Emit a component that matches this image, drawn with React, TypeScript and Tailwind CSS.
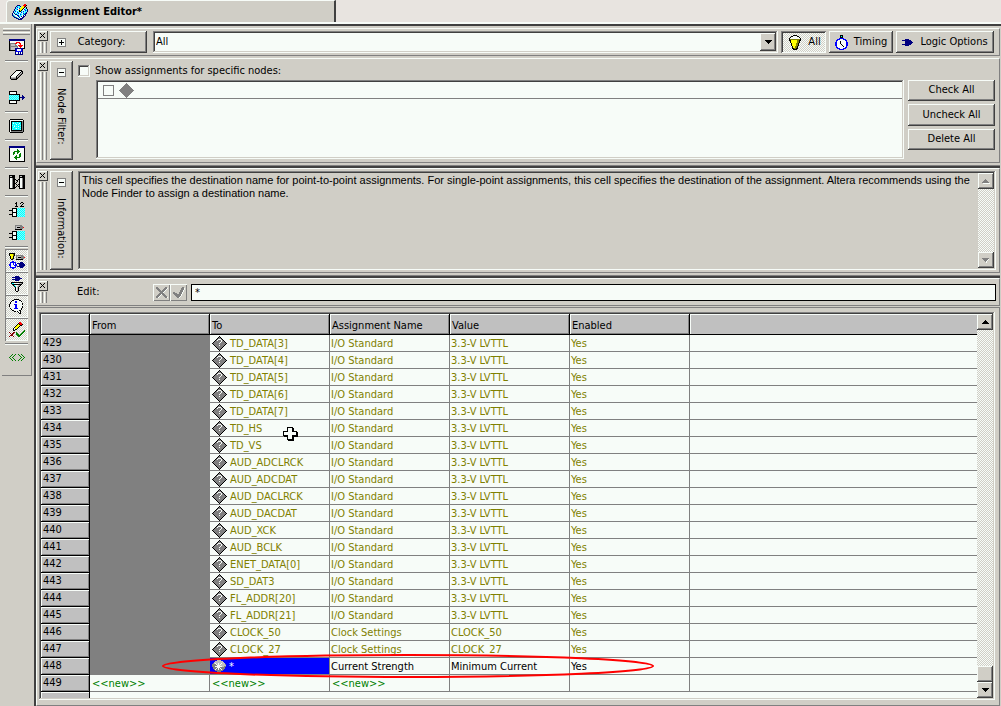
import React from "react";

const raised =
  "shadow-[inset_-1px_-1px_#404040,inset_1px_1px_#f7fcf8,inset_-2px_-2px_#808080]";
const sunken =
  "shadow-[inset_-1px_-1px_#f7fcf8,inset_1px_1px_#808080,inset_-2px_-2px_#d0cec6,inset_2px_2px_#404040]";
const dither =
  "bg-[repeating-conic-gradient(#f7fcf8_0_25%,#d0cec6_0_50%)] [background-size:2px_2px]";

const palette: Record<string, string> = {
  K: "#000000",
  B: "#000080",
  U: "#0000ff",
  A: "#0080c0",
  W: "#f7fcf8",
  G: "#808080",
  L: "#c0c0c0",
  C: "#00ffff",
  T: "#80ffff",
  R: "#ff0000",
  M: "#800000",
  Y: "#ffff00",
  O: "#808000",
  N: "#008000",
};

function Pixels({ rows, className }: { rows: string[]; className?: string }) {
  const w = Math.max(...rows.map((r) => r.length));
  return (
    <svg
      width={w}
      height={rows.length}
      viewBox={`0 0 ${w} ${rows.length}`}
      shapeRendering="crispEdges"
      className={`shrink-0 ${className ?? ""}`}
      aria-hidden="true"
    >
      {rows.flatMap((row, y) =>
        [...row].map((c, x) =>
          palette[c] ? (
            <rect key={`${x}-${y}`} x={x} y={y} width={1} height={1} fill={palette[c]} />
          ) : null,
        ),
      )}
    </svg>
  );
}

const editorArt = [
  "............RR..",
  ".....BBB...RRRK.",
  "....BCTCB.YYRK..",
  "...BTUTCTYYYK.K.",
  "...BCTWUYYYKWCK.",
  "..BTCUWYYYKWUCTB",
  "..BCTWTKYKTWTUCB",
  ".BTUTCTKKCTUTCTB",
  ".BCTWUCTWUTCTCB.",
  "BWBTCTUTCTWUCBB.",
  "BTWBBCTWUCTCBB..",
  "BATWWBUTCTWBWB..",
  ".BATWWBCTBWBB...",
  "..BBATWBWWBB....",
  "....BBAWBBB.....",
  "......BBBB......",
];
const exportArt = [
  "BBBBBBBBBBBBBBBB",
  "BBBBBBBBBBBBBBBB",
  "KWWWWWWWWWWWWWWK",
  "KWWWWWWRRRRWWWWK",
  "KGGGGGRRWWRRWWWK",
  "KGLLLLGWWWWRWWWK",
  "KGLLLLGGWRRRRRWK",
  "KGGGGGGGGWRRRWWK",
  "KGLLLLLLGWWRWWWK",
  "KGLLLLBBBBBBBBKK",
  "KGLLLLBUWWWWUB..",
  "KKKKKKBUWWWWUB..",
  "......BUUUUUUB..",
  "......BWWBWBWB..",
  "......BWWBWBWB..",
  "......BBBBBBBB..",
];
const eraserArt = [
  "......KKKKKK..",
  ".....KWWWWWKK.",
  "....KWWWWWKLK.",
  "...KWWWWWKLGK.",
  "..KWWWWWKLGK..",
  ".KWWWWWKLGK...",
  "KWWWWWKLGK....",
  "KLLLLLKGK.....",
  "KGGGGGKK......",
  ".KKKKKK.......",
];
const insertArt = [
  "KKKKKKKK........",
  "KWWWWWWK........",
  "KWWWWWWK........",
  "KKKKKKKKKKK.....",
  "CTCTCTCTCTK..B..",
  "TCTCTCTCTCK..BB.",
  "CTCTCTCTCTKBBBBB",
  "TCTCTCTCTCK..BB.",
  "CTCTCTCTCTK..B..",
  "KKKKKKKKKKK.....",
  "KWWWWWWK........",
  "KWWWWWWK........",
  "KKKKKKKK........",
];
const chipArt = [
  ".KKKKKKKKKKKKK.",
  "KWWWWWWWWWWWWWK",
  "KWKKKKKKKKKKKGK",
  "KWKCTCCCTCCCKGK",
  "KWKCWCTCCCWCKGK",
  "KWKCCCCWCTCCKGK",
  "KWKTCTCCCCCTKGK",
  "KWKCCWCTCWCCKGK",
  "KWKCTCCCCCCTKGK",
  "KWKCCCTWCTCCKGK",
  "KWKTCCCCCCCTKGK",
  "KWKKKKKKKKKKKGK",
  "KWGGGGGGGGGGGGK",
  ".KKKKKKKKKKKKK.",
];
const refreshArt = [
  "BBBBBBBBBBBBBBBB",
  "BBBBBBBBBBBBBBBB",
  "KWWWWWWWWWWWWWWK",
  "KWWWWWWWNWWWWWWK",
  "KWWWWWWWNNWWWWWK",
  "KWWWWNNNNNNWWWWK",
  "KWWWNNWWNNWWWWWK",
  "KWWWNNWWNWWNWWWK",
  "KWWWNWWWWWNNWWWK",
  "KWWWWWWNWWNNWWWK",
  "KWWWWWNNWWNNWWWK",
  "KWWWWNNNNNNWWWWK",
  "KWWWWWNNWWWWWWWK",
  "KWWWWWWNWWWWWWWK",
  "KWWWWWWWWWWWWWWK",
  "KKKKKKKKKKKKKKKK",
];
const findArt = [
  "KKKKKK....KKKKKK",
  "KLLKKK....KLLKKK",
  "KKKKKK....KKKKKK",
  "KWWGKK....KWWGKK",
  "KWWGKKK..KKWWGKK",
  "KWWGKK.KK.KWWGKK",
  "KWWGKK..K.KWWGKK",
  "KWWGKK.K..KWWGKK",
  "KWWGKKK...KWWGKK",
  "KWWGKK.K.KKWWGKK",
  "KWWGKK..K.KWWGKK",
  "KWWGKK.K.KKWWGKK",
  "KWWGKKK...KWWGKK",
  "KKKKKK....KKKKKK",
];
const numberArt = [
  ".......K....KK..",
  "......KK...K..K.",
  ".......K.....K..",
  ".......K....K...",
  "......KKK..KKKK.",
  "................",
  "...KKKKKTCTCTCTC",
  "...KWWWKCTCTCTCT",
  "KKKKWWWKTCTCTCTC",
  "...KWWWKCTCTCTCT",
  "...KKKKKTCTCTCTC",
  "...KWWWKCTCTCTCT",
  "KKKKWWWKTCTCTCTC",
  "...KWWWKCTCTCTCT",
  "...KKKKKTCTCTCTC",
];
const tagArt = [
  "......GGGGGGG...",
  "......GLLLLGGG..",
  "......GLKKKGGGR.",
  "......GLLLLGGG..",
  "......KKKKKKK...",
  "................",
  "...KKKKKTCTCTCTC",
  "...KWWWKCTCTCTCT",
  "KKKKWWWKTCTCTCTC",
  "...KWWWKCTCTCTCT",
  "...KKKKKTCTCTCTC",
  "...KWWWKCTCTCTCT",
  "KKKKWWWKTCTCTCTC",
  "...KWWWKCTCTCTCT",
  "...KKKKKTCTCTCTC",
];
const categoriesArt = [
  "KKKKKK..........",
  "KYYYOK..........",
  "KYYYOK.GGGGGGG..",
  ".KYYK..GLLLLGGG.",
  ".KYYK..GLKKKGGGR",
  ".KYOK..GLLLLGGG.",
  "..KK...KKKKKKK..",
  "................",
  "...UU...........",
  ".UUUUUU....BBB..",
  ".UWWUWU.BBBBBBB.",
  "UUWWUWUU..BBBBBB",
  "UUWWWUUU..BBBBBB",
  ".UWWWWU.BBBBBBB.",
  ".UUUUUU....BBB..",
  "...UU...........",
];
const filterArt = [
  "......BBBB......",
  "...BBBBBBBB.....",
  "......BBBBBBB...",
  "...BBBBBBBB.....",
  "......BBBB......",
  "................",
  "..KKKKKKKKKKKK..",
  "..KCCWWWWWLLGK..",
  "...KKKKKKKKKK...",
  "....KCWWWLGK....",
  ".....KCWLGK.....",
  "......KWLK......",
  "......KWLK......",
  "......KWLK......",
  "......KWLK......",
  ".......KK.......",
];
const infoArt = [
  ".....KKKKK......",
  "...KKWWWWWKK....",
  "..KWWWUUWWWWK...",
  ".KWWWWUUWWWWW...",
  ".KWWWWWWWWWWWK..",
  "KWWWWUUUWWWWWK..",
  "KWWWWWUUWWWWW...",
  "KWWWWWUUWWWWWK..",
  ".WWWWWUUWWWWWK..",
  ".KWWWUUUUWWWK...",
  "..KWWWWWWWWWK...",
  "...KKWWWWWKK....",
  ".....KK.KWWK....",
  ".........KWK....",
  "..........KK....",
];
const pencilArt = [
  "..........RR....",
  ".........KRRR...",
  "........KYKRRK..",
  ".......KYYYKK...",
  "......KYYYK.....",
  ".....KYYYK......",
  "....KWYYK.......",
  "....KWKK........",
  "....KK.........N",
  "..............NN",
  "M...MM.N.....NN.",
  ".M.MM..NN...NN..",
  "..MM...NNN.NN...",
  ".MMM....NNNN....",
  "M...M....NN.....",
];
const codeArt = [
  "...N..N..N..N...",
  "..N..N....N..N..",
  ".N..N......N..N.",
  "N..N........N..N",
  ".N..N......N..N.",
  "..N..N....N..N..",
  "...N..N..N..N...",
];
const bucketArt = [
  "....KKKK....",
  "..KKWWWWKK..",
  ".KWWWWWWWWK.",
  "KWWWWWWWWWWK",
  "KOOOOOOOOOOK",
  "KKYYYYYYOOKK",
  ".KYYYYYYOOK.",
  ".KYYYYYYOOK.",
  "..KYYYYOOK..",
  "..KYYYYOOK..",
  "..KYYYYOOK..",
  "...KYYOOK...",
  "...KYYOOK...",
  "...KKOOKK...",
  "....KKKK....",
];
const clockArt = [
  ".....KKK.....",
  ".....KCK.....",
  ".....KKK.....",
  "....UUUUU....",
  "..UUUWWWUUU..",
  ".UUWWWWWWWUU.",
  ".UWWWKWWWWWU.",
  "UUWWWKWWWWWUU",
  "UUWWWKWWWWWUU",
  "UUWWWWKWWWWUU",
  "UUWWWWWKWWWUU",
  ".UWWWWWWKWWU.",
  ".UUWWWWWWWUU.",
  "..UUUWWWUUU..",
  "....UUUUU....",
];
const plugArt = [
  "...BBBB....",
  "BBBBBBBBB..",
  "...BBBBBBB.",
  "...BBBBBBBB",
  "...BBBBBBB.",
  "BBBBBBBBB..",
  "...BBBB....",
];
const closeArt = ["K...K", ".K.K.", "..K..", ".K.K.", "K...K"];
const minusArt = [
  "GGGGGGGGG",
  "GWWWWWWWG",
  "GWWWWWWWG",
  "GWWWWWWWG",
  "GWKKKKKWG",
  "GWWWWWWWG",
  "GWWWWWWWG",
  "GWWWWWWWG",
  "GGGGGGGGG",
];
const plusArt = [
  "GGGGGGGGG",
  "GWWWWWWWG",
  "GWWWKWWWG",
  "GWWWKWWWG",
  "GWKKKKKWG",
  "GWWWKWWWG",
  "GWWWKWWWG",
  "GWWWWWWWG",
  "GGGGGGGGG",
];
const downArt = ["KKKKKKK", ".KKKKK.", "..KKK..", "...K..."];
const upArt = ["...K...", "..KKK..", ".KKKKK.", "KKKKKKK"];
const upGreyArt = ["...G....", "..GGG...", ".GGGGG..", "GGGGGGG.", ".WWWWWWW"];
const downGreyArt = ["GGGGGGG.", ".GGGGGW.", "..GGGW..", "...GW...", "....W..."];
const crossArt = [
  "GG.......GG.",
  "GGG.....GGGW",
  ".GGG...GGGW.",
  "..GGG.GGGW..",
  "...GGGGGW...",
  "....GGGW....",
  "...GGGGG....",
  "..GGGWGGG...",
  ".GGGW..GGG..",
  "GGGW....GGG.",
  "GGW......GGW",
];
const tickArt = [
  ".........GG.",
  "........GGGW",
  "........GGGW",
  ".......GGGW.",
  ".......GGGW.",
  "GG....GGGW..",
  "GGGG..GGGW..",
  ".GGGGGGGW...",
  "..GGGGGGW...",
  "...GGGGW....",
  "....GGW.....",
];
const nodeArt = [
  ".......K.......",
  "......KGK......",
  ".....KGGGK.....",
  "....KGWWWGK....",
  "...KGWGGGWGK...",
  "..KGGGGGGWGGK..",
  ".KGGGGGGWGGGGK.",
  "KGGGGGGWGGGGGGK",
  ".KGGGGGGGGGGGK.",
  "..KGGGGWGGGGK..",
  "...KGGGGGGGK...",
  "....KGGGGGK....",
  ".....KGGGK.....",
  "......KGK......",
  ".......K.......",
];
const wildcardArt = [
  ".....LLLL.....",
  "...LLLLLLLL...",
  "..LLLLLLLLLL..",
  ".GLWLLWLLWLLL.",
  "GGGGWLWLWLLLLG",
  "GGGGGWWWLLLLLL",
  "GGGWWWWWWWLLGG",
  ".GGGGWWWGGGGG.",
  ".GGGWGWGWGGGG.",
  "..GWGGWGGWGG..",
  "...GGGGGGGG...",
  ".....GGGG.....",
];
const diamondArt = [
  ".......G.......",
  "......GGG......",
  ".....GGGGG.....",
  "....GGGGGGG....",
  "...GGGGGGGGG...",
  "..GGGGGGGGGGG..",
  ".GGGGGGGGGGGGG.",
  "GGGGGGGGGGGGGGG",
  ".GGGGGGGGGGGGG.",
  "..GGGGGGGGGGG..",
  "...GGGGGGGGG...",
  "....GGGGGGG....",
  ".....GGGGG.....",
  "......GGG......",
  ".......G.......",
];
const pointerArt = [
  "....KKKKKK.....",
  "....KWWWWKK....",
  "....KWWWWKK....",
  "....KWWWWKK....",
  "KKKKKWWWWKKKKK.",
  "KWWWWWWWWWWWWKK",
  "KWWWWWWWWWWWWKK",
  "KWWWWWWWWWWWWKK",
  "KKKKKWWWWKKKKKK",
  ".KKKKWWWWKKKKKK",
  "....KWWWWKK....",
  "....KWWWWKK....",
  "....KKKKKKK....",
  ".....KKKKKK....",
];

function ToolButton({ art, label, pressed }: { art: string[]; label: string; pressed?: boolean }) {
  return (
    <button
      type="button"
      aria-label={label}
      aria-pressed={pressed}
      className={`flex h-[23px] w-[23px] items-center justify-center ${
        pressed ? `${dither} shadow-[inset_1px_1px_#808080,inset_-1px_-1px_#f7fcf8]` : ""
      }`}
    >
      <Pixels rows={art} />
    </button>
  );
}

function Separator() {
  return (
    <div className="flex h-[5px] w-[23px] items-center">
      <div className="h-[2px] w-full border-t border-[#808080] bg-[#f7fcf8]" />
    </div>
  );
}

function Grip({ label }: { label: string }) {
  return (
    <div className="flex w-[10px] shrink-0 flex-col items-center gap-px">
      <button
        type="button"
        aria-label={`Close ${label}`}
        className="flex h-[10px] w-[10px] items-center justify-center pr-px pb-px shadow-[inset_-1px_-1px_#404040,inset_1px_1px_#f7fcf8]"
      >
        <Pixels rows={closeArt} />
      </button>
      <div className="flex flex-1 gap-px">
        <div className="w-[3px] border-r border-l border-l-[#f7fcf8] border-r-[#808080]" />
        <div className="w-[3px] border-r border-l border-l-[#f7fcf8] border-r-[#808080]" />
      </div>
    </div>
  );
}

function Panel({ label, children, className }: { label: string; children: React.ReactNode; className?: string }) {
  return (
    <section
      aria-label={label}
      className={`flex gap-[2px] border-t border-r border-b border-l border-t-[#f7fcf8] border-r-[#808080] border-b-[#808080] border-l-[#f7fcf8] py-[2px] pr-[3px] pl-px ${className ?? ""}`}
    >
      <Grip label={label} />
      {children}
    </section>
  );
}

function SideTab({ text }: { text: string }) {
  return (
    <button
      type="button"
      aria-expanded="true"
      className={`flex w-[23px] shrink-0 flex-col items-center gap-[11px] pt-[7px] ${raised}`}
    >
      <Pixels rows={minusArt} />
      <span className="pr-px leading-[14px] [writing-mode:vertical-rl]">{text}</span>
    </button>
  );
}

function PushButton({ children, className }: { children: React.ReactNode; className?: string }) {
  return (
    <button type="button" className={`flex items-center justify-center ${raised} ${className ?? ""}`}>
      {children}
    </button>
  );
}

const assignments: [number, string, string, string][] = [
  [429, "TD_DATA[3]", "I/O Standard", "3.3-V LVTTL"],
  [430, "TD_DATA[4]", "I/O Standard", "3.3-V LVTTL"],
  [431, "TD_DATA[5]", "I/O Standard", "3.3-V LVTTL"],
  [432, "TD_DATA[6]", "I/O Standard", "3.3-V LVTTL"],
  [433, "TD_DATA[7]", "I/O Standard", "3.3-V LVTTL"],
  [434, "TD_HS", "I/O Standard", "3.3-V LVTTL"],
  [435, "TD_VS", "I/O Standard", "3.3-V LVTTL"],
  [436, "AUD_ADCLRCK", "I/O Standard", "3.3-V LVTTL"],
  [437, "AUD_ADCDAT", "I/O Standard", "3.3-V LVTTL"],
  [438, "AUD_DACLRCK", "I/O Standard", "3.3-V LVTTL"],
  [439, "AUD_DACDAT", "I/O Standard", "3.3-V LVTTL"],
  [440, "AUD_XCK", "I/O Standard", "3.3-V LVTTL"],
  [441, "AUD_BCLK", "I/O Standard", "3.3-V LVTTL"],
  [442, "ENET_DATA[0]", "I/O Standard", "3.3-V LVTTL"],
  [443, "SD_DAT3", "I/O Standard", "3.3-V LVTTL"],
  [444, "FL_ADDR[20]", "I/O Standard", "3.3-V LVTTL"],
  [445, "FL_ADDR[21]", "I/O Standard", "3.3-V LVTTL"],
  [446, "CLOCK_50", "Clock Settings", "CLOCK_50"],
  [447, "CLOCK_27", "Clock Settings", "CLOCK_27"],
];

const cellBase =
  "h-[17px] overflow-hidden border-r border-b border-[#808080] p-0 whitespace-nowrap";
const cell = `${cellBase} pl-[2px] leading-4`;
const textCell = `${cellBase} pt-[2px] pl-px leading-[14px]`;
const newCell = `${cellBase} pt-[2px] pl-[2px] leading-[14px]`;
const rowHead =
  "h-[17px] border-r border-b border-black bg-[#c0c0c0] p-0 pl-[2px] text-left leading-4 font-normal shadow-[inset_1px_1px_#f7fcf8,inset_-1px_-1px_#808080]";
const colHead =
  "h-[21px] border-r border-b border-black bg-[#c0c0c0] p-0 pt-[3px] pl-[2px] text-left leading-[17px] font-normal shadow-[inset_1px_1px_#f7fcf8,inset_-1px_-1px_#808080]";

function AssignmentTable() {
  return (
    <table className="w-full table-fixed border-separate border-spacing-0">
      <colgroup>
        <col className="w-[49px]" />
        <col className="w-[120px]" />
        <col className="w-[120px]" />
        <col className="w-[120px]" />
        <col className="w-[120px]" />
        <col className="w-[120px]" />
        <col />
      </colgroup>
      <thead>
        <tr>
          <td className={colHead} />
          {["From", "To", "Assignment Name", "Value", "Enabled"].map((h) => (
            <th key={h} scope="col" className={colHead}>
              {h}
            </th>
          ))}
          <td className="border-b border-black bg-[#c0c0c0] p-0 shadow-[inset_1px_1px_#f7fcf8]" />
        </tr>
      </thead>
      <tbody>
        {assignments.map(([id, to, name, value]) => (
          <tr key={id} className="text-[#808000]">
            <th scope="row" className={`${rowHead} text-black`}>
              {id}
            </th>
            <td className="bg-[#808080] p-0" />
            <td className={cell}>
              <div className="flex h-4 items-center gap-[3px]">
                <Pixels rows={nodeArt} />
                <span className="pt-[2px]">{to}</span>
              </div>
            </td>
            <td className={textCell}>{name}</td>
            <td className={textCell}>{value}</td>
            <td className={textCell}>Yes</td>
            <td className={`${cell} border-r-0`} />
          </tr>
        ))}
        <tr>
          <th scope="row" className={rowHead}>
            448
          </th>
          <td className="bg-[#808080] p-0" />
          <td className={`${cell} bg-[#0000ff] text-white`}>
            <div className="flex h-4 items-center gap-[3px]">
              <Pixels rows={wildcardArt} />
              <span className="pt-px">*</span>
            </div>
          </td>
          <td className={textCell}>Current Strength</td>
          <td className={textCell}>Minimum Current</td>
          <td className={textCell}>Yes</td>
          <td className={`${cell} border-r-0`} />
        </tr>
        <tr className="text-[#008000]">
          <th scope="row" className={`${rowHead} text-black`}>
            449
          </th>
          <td className={newCell}>&lt;&lt;new&gt;&gt;</td>
          <td className={newCell}>&lt;&lt;new&gt;&gt;</td>
          <td className={newCell}>&lt;&lt;new&gt;&gt;</td>
          <td className={cell} />
          <td className={cell} />
          <td className={`${cell} border-r-0`} />
        </tr>
        <tr>
          <td className="h-[6px] border-r border-black bg-[#c0c0c0] p-0 shadow-[inset_1px_1px_#f7fcf8]" />
          <td colSpan={6} className="p-0" />
        </tr>
      </tbody>
    </table>
  );
}

export default function App() {
  return (
    <div className="flex min-h-screen flex-col bg-[#d0cec6] font-['DejaVu_Sans_Condensed','DejaVu_Sans',sans-serif] text-[11px] text-black">
      <header className="flex h-[24px] items-start border-b-2 border-[#f7fcf8] bg-[#e8e4e0] pl-[6px]">
        <div className="flex h-[22px] w-[330px] items-center gap-[6px] rounded-tl-sm border-t border-r-2 border-l border-t-[#f7fcf8] border-r-[#404040] border-l-[#f7fcf8] bg-[#d0cec6] pl-[5px]">
          <Pixels rows={editorArt} />
          <h1 className="pt-px font-bold">Assignment Editor*</h1>
        </div>
      </header>

      <div className="flex flex-1 items-stretch">
        <nav
          aria-label="Editor tools"
          className="ml-[2px] flex w-[30px] shrink-0 flex-col items-center self-start border-r border-b border-[#808080] pt-[4px] pb-[6px]"
        >
          <div className="flex w-[27px] flex-col gap-px">
            <div className="h-[3px] border-t border-b border-t-[#f7fcf8] border-b-[#808080]" />
            <div className="h-[3px] border-t border-b border-t-[#f7fcf8] border-b-[#808080]" />
          </div>
          <ToolButton art={exportArt} label="Export" />
          <Separator />
          <ToolButton art={eraserArt} label="Erase" />
          <ToolButton art={insertArt} label="Insert row" />
          <Separator />
          <ToolButton art={chipArt} label="Device" />
          <Separator />
          <ToolButton art={refreshArt} label="Refresh" />
          <Separator />
          <ToolButton art={findArt} label="Node finder" />
          <Separator />
          <ToolButton art={numberArt} label="Number pins" />
          <ToolButton art={tagArt} label="Tag pins" />
          <Separator />
          <ToolButton art={categoriesArt} label="Category bar" pressed />
          <ToolButton art={filterArt} label="Node filter bar" pressed />
          <ToolButton art={infoArt} label="Information bar" pressed />
          <ToolButton art={pencilArt} label="Edit bar" pressed />
          <Separator />
          <ToolButton art={codeArt} label="Show code" />
        </nav>

        <main className="ml-[2px] flex min-w-0 flex-1 flex-col border-t-2 border-l-2 border-[#404040] pt-[2px] pr-px">
          <Panel label="Category" className="h-[28px]">
            <PushButton className="w-[97px] shrink-0 gap-[12px] pr-[15px]">
              <Pixels rows={plusArt} />
              <span>Category:</span>
            </PushButton>
            <div className={`ml-[4px] flex min-w-0 flex-1 bg-[#f7fcf8] p-[2px] ${sunken}`}>
              <select aria-label="Category" className="min-w-0 flex-1 appearance-none bg-transparent px-px leading-4">
                <option>All</option>
              </select>
              <span className={`pointer-events-none flex w-[16px] items-center justify-center bg-[#d0cec6] ${raised}`}>
                <Pixels rows={downArt} />
              </span>
            </div>
            <div className="ml-px flex shrink-0 gap-[3px] pr-[2px]">
              <button
                type="button"
                aria-pressed="true"
                className={`flex w-[45px] items-center justify-center gap-[7px] pl-[3px] ${dither} shadow-[inset_1px_1px_#808080,inset_-1px_-1px_#f7fcf8,inset_2px_2px_#404040]`}
              >
                <Pixels rows={bucketArt} />
                <span>All</span>
              </button>
              <PushButton className="w-[64px] gap-[6px]">
                <Pixels rows={clockArt} />
                <span>Timing</span>
              </PushButton>
              <PushButton className="w-[98px] gap-[7px]">
                <Pixels rows={plugArt} />
                <span>Logic Options</span>
              </PushButton>
            </div>
          </Panel>

          <Panel label="Node filter" className="mt-[2px] h-[105px]">
            <SideTab text="Node Filter:" />
            <div className="ml-[3px] flex min-w-0 flex-1 flex-col">
              <label className="flex h-[19px] items-center gap-[5px] pt-px">
                <input type="checkbox" className={`h-[12px] w-[12px] appearance-none bg-[#f7fcf8] ${sunken}`} />
                Show assignments for specific nodes:
              </label>
              <div className="flex flex-1 gap-[4px]">
                <div className={`mb-px ml-[18px] min-w-0 flex-1 bg-[#f7fcf8] p-[2px] ${sunken}`}>
                  <div className="flex h-[17px] items-center gap-[5px] border-b border-[#808080] pl-[5px]">
                    <input
                      type="checkbox"
                      aria-label="Node"
                      className="h-[11px] w-[11px] appearance-none border border-[#808080] bg-[#f7fcf8]"
                    />
                    <Pixels rows={diamondArt} />
                  </div>
                </div>
                <div className="flex w-[88px] flex-col gap-[3px] pr-px">
                  <PushButton className="h-[21px]">Check All</PushButton>
                  <PushButton className="h-[22px]">Uncheck All</PushButton>
                  <PushButton className="h-[21px]">Delete All</PushButton>
                </div>
              </div>
            </div>
          </Panel>

          <div className="mt-[2px] h-[3px] border-t border-b-2 border-t-[#808080] border-b-[#404040]" />

          <Panel label="Information" className="h-[105px]">
            <SideTab text="Information:" />
            <div className={`ml-[3px] flex min-w-0 flex-1 p-[2px] ${sunken}`}>
              <p className="flex-1 pt-px pl-[2px] font-['Liberation_Sans','Roboto',sans-serif] leading-[13px]">
                This cell specifies the destination name for point-to-point assignments. For single-point assignments,
                this cell specifies the destination of the assignment. Altera recommends using the Node Finder to assign
                a destination name.
              </p>
              <div className={`flex w-[16px] flex-col justify-between ${dither}`}>
                <button
                  type="button"
                  aria-label="Scroll information up"
                  className={`flex h-[16px] items-center justify-center bg-[#d0cec6] ${raised}`}
                >
                  <Pixels rows={upGreyArt} />
                </button>
                <button
                  type="button"
                  aria-label="Scroll information down"
                  className={`flex h-[16px] items-center justify-center bg-[#d0cec6] ${raised}`}
                >
                  <Pixels rows={downGreyArt} />
                </button>
              </div>
            </div>
          </Panel>

          <div className="mt-[2px] h-[3px] border-t border-b-2 border-t-[#808080] border-b-[#404040]" />

          <Panel label="Edit" className="h-[28px]">
            <label htmlFor="edit-value" className="w-[101px] shrink-0 self-center pl-[27px]">
              Edit:
            </label>
            <div className="flex items-center">
              <button
                type="button"
                aria-label="Cancel"
                className="flex h-[17px] w-[17px] items-center justify-center shadow-[inset_1px_1px_#f7fcf8,inset_-1px_-1px_#808080]"
              >
                <Pixels rows={crossArt} />
              </button>
              <button
                type="button"
                aria-label="Accept"
                className="flex h-[17px] w-[17px] items-center justify-center shadow-[inset_1px_1px_#f7fcf8,inset_-1px_-1px_#808080]"
              >
                <Pixels rows={tickArt} />
              </button>
            </div>
            <input
              id="edit-value"
              type="text"
              defaultValue="*"
              className="ml-[2px] h-[17px] min-w-0 flex-1 self-center border border-black bg-[#f7fcf8] px-[3px]"
            />
          </Panel>

          <section
            aria-label="Assignments"
            className="mt-px flex flex-1 flex-col border-t border-r border-b border-l border-t-[#808080] border-r-[#808080] border-b-[#808080] border-l-[#f7fcf8] pt-[4px] pr-[4px] pb-[5px] pl-[2px]"
          >
            <div className={`relative flex bg-[#f7fcf8] p-[2px] ${sunken}`}>
              <div className="min-w-0 flex-1">
                <AssignmentTable />
              </div>
              <div className={`flex w-[16px] shrink-0 flex-col ${dither}`}>
                <button
                  type="button"
                  aria-label="Scroll up"
                  className={`flex h-[16px] items-center justify-center bg-[#d0cec6] ${raised}`}
                >
                  <Pixels rows={upArt} />
                </button>
                <div className={`mt-auto h-[16px] bg-[#d0cec6] ${raised}`} />
                <button
                  type="button"
                  aria-label="Scroll down"
                  className={`flex h-[16px] items-center justify-center bg-[#d0cec6] ${raised}`}
                >
                  <Pixels rows={downArt} />
                </button>
              </div>
              <Pixels rows={pointerArt} className="pointer-events-none absolute top-[115px] left-[244px]" />
              <svg
                width="492"
                height="26"
                viewBox="0 0 492 26"
                className="pointer-events-none absolute top-[341px] left-[123px]"
                aria-hidden="true"
              >
                <ellipse cx="246" cy="13" rx="245" ry="11" fill="none" stroke="#ff0000" strokeWidth="2" />
              </svg>
            </div>
          </section>
        </main>
      </div>
    </div>
  );
}
